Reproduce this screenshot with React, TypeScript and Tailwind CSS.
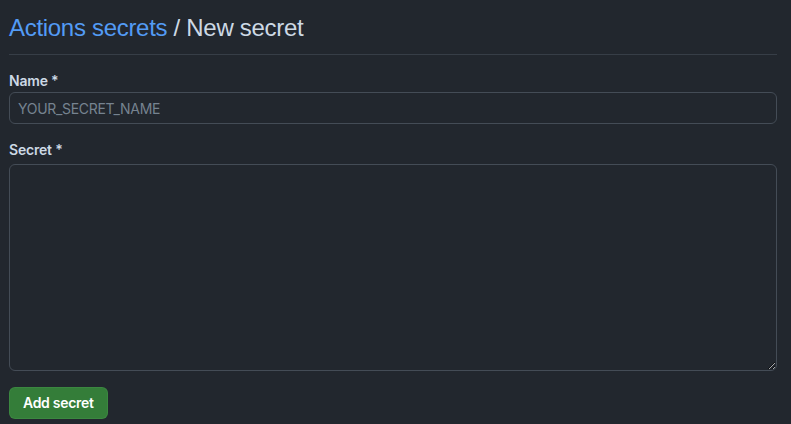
export default function App() {
  return (
    <div className="min-h-screen w-full bg-[#22272e] font-['Inter','Liberation_Sans',sans-serif] text-[#adbac7]">
      <div className="pl-[9px] pr-[14px] pt-[10px]">
        <div className="border-b border-[#373e47] pb-[8px]">
          <h2 className="font-['Liberation_Sans','Inter',sans-serif] text-[24px] leading-[36px] font-normal tracking-[-0.3px]">
            <a className="text-[#539bf5]">Actions secrets</a>
            <span className="text-[#cdd9e5]"> / New secret</span>
          </h2>
        </div>

        <form className="pt-[15px]">
          <label className="mb-[1px] block text-[14px] font-semibold leading-[21px] tracking-[-0.2px] text-[#cdd9e5]">
            Name *
          </label>
          <input
            className="h-[32px] w-full rounded-[6px] border border-[#444c56] bg-[#22272e] px-[8px] text-[14px] tracking-[-0.3px] text-[#adbac7] placeholder:text-[#768390] outline-none"
            placeholder="YOUR_SECRET_NAME"
          />

          <label className="mb-[4px] mt-[15px] block text-[14px] font-semibold leading-[21px] tracking-[-0.2px] text-[#cdd9e5]">
            Secret *
          </label>
          <textarea className="block h-[207px] w-full rounded-[6px] border border-[#444c56] bg-[#22272e] px-[8px] py-[6px] text-[14px] outline-none" />

          <button
            type="button"
            className="mt-[16px] h-[32px] rounded-[6px] border border-[#46954a]/40 bg-[#347d39] px-[13px] text-[14px] font-semibold leading-[20px] tracking-[-0.3px] text-white"
          >
            Add secret
          </button>
        </form>
      </div>
    </div>
  );
}
